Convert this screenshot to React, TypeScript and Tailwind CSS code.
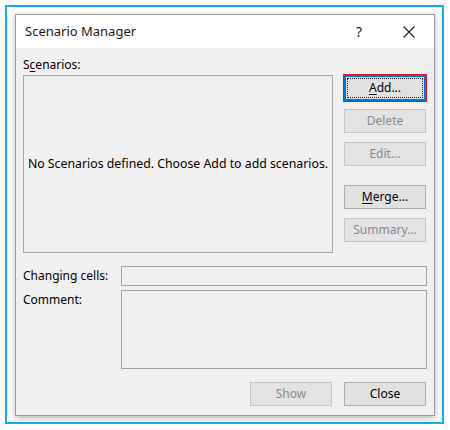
import React from "react";

const font = { fontFamily: '"Noto Sans", "Open Sans", sans-serif' };

function Btn({
  children,
  disabled,
  focused,
}: {
  children: React.ReactNode;
  disabled?: boolean;
  focused?: boolean;
}) {
  if (focused) {
    return (
      <div className="h-[26px] w-[82px] border-2 border-[#0078d7] bg-[#e1e1e1] outline outline-1 outline-[#e81123] p-[1px]">
        <div className="flex h-full w-full items-center justify-center border border-dotted border-[#222] text-[12px] text-black">
          {children}
        </div>
      </div>
    );
  }
  return (
    <div
      className={
        disabled
          ? "flex h-[24px] w-[82px] items-center justify-center border border-[#c6c6c6] bg-[#e3e3e3] text-[12px] text-[#8a8a8a]"
          : "flex h-[24px] w-[82px] items-center justify-center border border-[#adadad] bg-[#e1e1e1] text-[12px] text-black"
      }
    >
      {children}
    </div>
  );
}

export default function App() {
  return (
    <div className="h-[430px] w-[450px] bg-white pl-[5px] pt-[5px]" style={font}>
      <div className="h-[419px] w-[439px] border-2 border-[#0cb0ee] bg-white pl-[8px] pt-[7px]">
        <div className="flex h-[402px] w-[420px] flex-col border border-[#9a9a9a] bg-[#f0f0f0] shadow-[0_2px_7px_rgba(0,0,0,0.3)]">
          {/* title bar */}
          <div className="flex h-[33px] items-center bg-white pl-[9px]">
            <div className="text-[13px] text-[#1a1a1a]">Scenario Manager</div>
            <div className="ml-auto mr-[41px] text-[14px] text-[#1a1a1a]">?</div>
            <svg width="12" height="12" viewBox="0 0 12 12" className="mr-[19px]">
              <path d="M0.5 0.5 L11.5 11.5 M11.5 0.5 L0.5 11.5" stroke="#222" strokeWidth="1.1" />
            </svg>
          </div>
          {/* body */}
          <div className="flex flex-col px-[7px] pt-[9px]">
            <div className="flex">
              <div className="flex flex-col">
                <div className="h-[15px] text-[12px] leading-[15px] text-black">
                  S<span className="underline underline-offset-2">c</span>enarios:
                </div>
                <div className="mt-[3px] flex h-[178px] w-[310px] items-center justify-center border border-[#a5a5a5] bg-[#f0f0f0] text-[12.3px] text-black">
                  No Scenarios defined. Choose Add to add scenarios.
                </div>
              </div>
              <div className="ml-[11px] mt-[18px] flex flex-col">
                <Btn focused>
                  <span>
                    <span className="underline underline-offset-2">A</span>dd...
                  </span>
                </Btn>
                <div className="mt-[8px]">
                  <Btn disabled>Delete</Btn>
                </div>
                <div className="mt-[9px]">
                  <Btn disabled>Edit...</Btn>
                </div>
                <div className="mt-[19px]">
                  <Btn>
                    <span>
                      <span className="underline underline-offset-2">M</span>erge...
                    </span>
                  </Btn>
                </div>
                <div className="mt-[9px]">
                  <Btn disabled>Summary...</Btn>
                </div>
              </div>
            </div>
            <div className="mt-[13px] flex items-center">
              <div className="w-[98px] text-[12px] text-black">Changing cells:</div>
              <div className="h-[20px] w-[306px] border border-[#a5a5a5] bg-[#f0f0f0]" />
            </div>
            <div className="mt-[4px] flex">
              <div className="w-[98px] pt-[1px] text-[12px] text-black">Comment:</div>
              <div className="h-[79px] w-[306px] border border-[#a5a5a5] bg-[#f0f0f0]" />
            </div>
            <div className="mt-[13px] flex justify-end gap-[12px] pr-[1px]">
              <Btn disabled>Show</Btn>
              <Btn>Close</Btn>
            </div>
          </div>
        </div>
      </div>
    </div>
  );
}
